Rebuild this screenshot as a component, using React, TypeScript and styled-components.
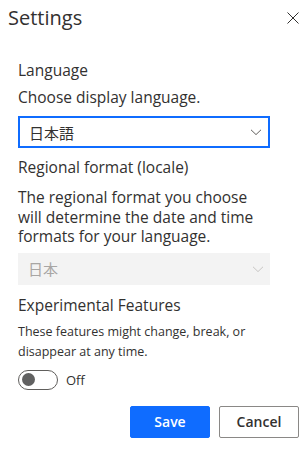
import React from "react";
import styled, { createGlobalStyle } from "styled-components";

const Global = createGlobalStyle`
  html, body { margin: 0; padding: 0; background: #fff; }
  body {
    font-family: "Open Sans", "Noto Sans", "Noto Sans CJK JP", sans-serif;
    color: #323130;
    -webkit-font-smoothing: antialiased;
  }
`;

const Panel = styled.div`
  width: 306px;
  height: 449px;
  box-sizing: border-box;
  display: flex;
  flex-direction: column;
  background: #fff;
`;

const Header = styled.div`
  display: flex;
  align-items: flex-start;
  justify-content: space-between;
  height: 38px;
  box-sizing: border-box;
  padding: 4px 7px 0 8px;
`;

const Title = styled.h1`
  margin: 0;
  font-size: 20px;
  font-weight: 500;
  line-height: 28px;
  color: #323130;
`;

const CloseButton = styled.button`
  border: none;
  background: transparent;
  padding: 0;
  margin-top: 8px;
  width: 12px;
  height: 12px;
  display: flex;
  align-items: center;
  justify-content: center;
  color: #323130;
`;

const Body = styled.div`
  display: flex;
  flex-direction: column;
  padding: 22px 36px 0 18px;
`;

const SectionTitle = styled.div<{ $gap: number }>`
  font-size: 15.5px;
  line-height: 20px;
  font-weight: 400;
  margin-bottom: ${(p) => p.$gap}px;
`;

const Label = styled.div`
  font-size: 15.5px;
  line-height: 20px;
  font-weight: 500;
  margin-bottom: 9px;
`;

const Select = styled.div<{ $disabled?: boolean }>`
  height: 32px;
  box-sizing: border-box;
  display: flex;
  align-items: center;
  justify-content: space-between;
  padding: 0 6px 0 ${(p) => (p.$disabled ? "10px" : "9px")};
  border: ${(p) => (p.$disabled ? "none" : "2px solid #0f6cff")};
  background: ${(p) => (p.$disabled ? "#f3f3f3" : "#fff")};
  color: ${(p) => (p.$disabled ? "#a8a6a4" : "#323130")};
  font-size: 15px;
  margin-bottom: ${(p) => (p.$disabled ? "10px" : "9px")};
`;

const Description = styled.div`
  font-size: 15.5px;
  line-height: 19.5px;
  font-weight: 500;
  margin-bottom: 6px;
`;

const Small = styled.div`
  font-size: 12.5px;
  line-height: 20px;
  margin-bottom: 8px;
`;

const ToggleRow = styled.div`
  display: flex;
  align-items: center;
  gap: 8px;
  font-size: 13px;
  height: 20px;
`;

const Track = styled.div`
  width: 40px;
  height: 20px;
  box-sizing: border-box;
  border: 1px solid #605e5c;
  border-radius: 10px;
  display: flex;
  align-items: center;
  padding-left: 3px;
`;

const Thumb = styled.div`
  width: 13px;
  height: 13px;
  border-radius: 50%;
  background: #616161;
`;

const Footer = styled.div`
  display: flex;
  justify-content: flex-end;
  gap: 9px;
  padding: 16px 7px 0 0;
`;

const Button = styled.button<{ $primary?: boolean }>`
  height: 32px;
  min-width: 80px;
  box-sizing: border-box;
  padding: 0 16px;
  font-family: inherit;
  font-size: 14px;
  font-weight: 600;
  border-radius: 2px;
  border: 1px solid ${(p) => (p.$primary ? "#0f6cff" : "#8a8886")};
  background: ${(p) => (p.$primary ? "#0f6cff" : "#fff")};
  color: ${(p) => (p.$primary ? "#fff" : "#323130")};
`;

const Chevron = ({ color }: { color: string }) => (
  <svg width="12" height="12" viewBox="0 0 12 12" fill="none">
    <path d="M1 3.8 L6 8.6 L11 3.8" stroke={color} strokeWidth="1" />
  </svg>
);

export default function App() {
  return (
    <Panel>
      <Global />
      <Header>
        <Title>Settings</Title>
        <CloseButton aria-label="Close">
          <svg width="12" height="12" viewBox="0 0 12 12">
            <path d="M0.5 0.5 L11.5 11.5 M11.5 0.5 L0.5 11.5" stroke="#323130" strokeWidth="1" />
          </svg>
        </CloseButton>
      </Header>
      <Body>
        <SectionTitle $gap={7}>Language</SectionTitle>
        <Label>Choose display language.</Label>
        <Select>
          <span>日本語</span>
          <Chevron color="#605e5c" />
        </Select>
        <SectionTitle $gap={11}>Regional format (locale)</SectionTitle>
        <Description>
          The regional format you choose will determine the date and time formats for your language.
        </Description>
        <Select $disabled>
          <span>日本</span>
          <Chevron color="#c8c6c4" />
        </Select>
        <SectionTitle $gap={7}>Experimental Features</SectionTitle>
        <Small>These features might change, break, or disappear at any time.</Small>
        <ToggleRow>
          <Track>
            <Thumb />
          </Track>
          <span>Off</span>
        </ToggleRow>
      </Body>
      <Footer>
        <Button $primary>Save</Button>
        <Button>Cancel</Button>
      </Footer>
    </Panel>
  );
}
